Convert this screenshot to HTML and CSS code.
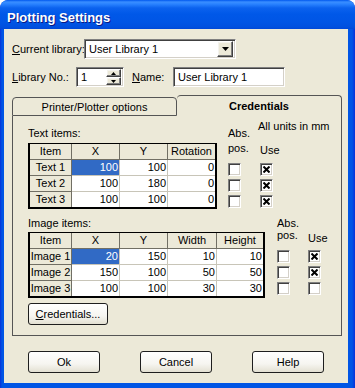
FILE: index.html
```html
<!DOCTYPE html>
<html>
<head>
<meta charset="utf-8">
<link rel="stylesheet" href="styles.css">
</head>
<body>
<div class="window">
  <div class="titlebar"><span class="title">Plotting Settings</span></div>
  <div class="client">
    <div class="row row-lib">
      <span class="lbl lbl-current"><u>C</u>urrent library:</span>
      <div class="combo sunken">
        <span class="combo-text">User Library 1</span>
        <span class="combo-btn raised"><svg width="7" height="4" viewBox="0 0 7 4"><polygon points="0,0 7,0 3.5,4" fill="#000"/></svg></span>
      </div>
    </div>
    <div class="row row-no">
      <span class="lbl lbl-no"><u>L</u>ibrary No.:</span>
      <div class="spin sunken">
        <span class="spin-text">1</span>
        <div class="spin-btns">
          <span class="spin-btn raised"><svg width="5" height="3" viewBox="0 0 5 3"><polygon points="2.5,0 5,3 0,3" fill="#000"/></svg></span>
          <span class="spin-btn raised"><svg width="5" height="3" viewBox="0 0 5 3"><polygon points="0,0 5,0 2.5,3" fill="#000"/></svg></span>
        </div>
      </div>
      <span class="lbl lbl-name"><u>N</u>ame:</span>
      <div class="field sunken">User Library 1</div>
    </div>
    <div class="tabs">
      <div class="tab">Printer/Plotter options</div>
      <div class="tab tab-active">Credentials</div>
    </div>
    <div class="panel">
      <div class="section sec-text">
        <div class="col-table">
          <div class="cap">Text items:</div>
          <div class="grid grid-text">
            <div class="c h">Item</div><div class="c h">X</div><div class="c h">Y</div><div class="c h last">Rotation</div>
            <div class="c h">Text 1</div><div class="c d sel">100</div><div class="c d">100</div><div class="c d last">0</div>
            <div class="c h">Text 2</div><div class="c d">100</div><div class="c d">180</div><div class="c d last">0</div>
            <div class="c h lr">Text 3</div><div class="c d lr">100</div><div class="c d lr">100</div><div class="c d last lr">0</div>
          </div>
        </div>
        <div class="col-abs abs-text">
          <div class="abs-lbl">Abs.<br>pos.</div>
          <div class="checks">
            <span class="cb"></span><span class="cb"></span><span class="cb"></span>
          </div>
        </div>
        <div class="col-use use-text">
          <div class="units">All units in mm</div>
          <div class="use-lbl">Use</div>
          <div class="checks">
            <span class="cb"><svg width="7" height="7" viewBox="0 0 7 7"><path d="M0.5 0.5L6.5 6.5M6.5 0.5L0.5 6.5" stroke="#000" stroke-width="2"/></svg></span>
            <span class="cb"><svg width="7" height="7" viewBox="0 0 7 7"><path d="M0.5 0.5L6.5 6.5M6.5 0.5L0.5 6.5" stroke="#000" stroke-width="2"/></svg></span>
            <span class="cb"><svg width="7" height="7" viewBox="0 0 7 7"><path d="M0.5 0.5L6.5 6.5M6.5 0.5L0.5 6.5" stroke="#000" stroke-width="2"/></svg></span>
          </div>
        </div>
      </div>
      <div class="section sec-image">
        <div class="col-table">
          <div class="cap">Image items:</div>
          <div class="grid grid-image">
            <div class="c h">Item</div><div class="c h">X</div><div class="c h">Y</div><div class="c h">Width</div><div class="c h last">Height</div>
            <div class="c h">Image 1</div><div class="c d sel">20</div><div class="c d">150</div><div class="c d">10</div><div class="c d last">10</div>
            <div class="c h">Image 2</div><div class="c d">150</div><div class="c d">100</div><div class="c d">50</div><div class="c d last">50</div>
            <div class="c h lr">Image 3</div><div class="c d lr">100</div><div class="c d lr">100</div><div class="c d lr">30</div><div class="c d last lr">30</div>
          </div>
        </div>
        <div class="col-abs abs-image">
          <div class="abs-lbl">Abs.<br>pos.</div>
          <div class="checks">
            <span class="cb"></span><span class="cb"></span><span class="cb"></span>
          </div>
        </div>
        <div class="col-use use-image">
          <div class="use-lbl">Use</div>
          <div class="checks">
            <span class="cb"><svg width="7" height="7" viewBox="0 0 7 7"><path d="M0.5 0.5L6.5 6.5M6.5 0.5L0.5 6.5" stroke="#000" stroke-width="2"/></svg></span>
            <span class="cb"><svg width="7" height="7" viewBox="0 0 7 7"><path d="M0.5 0.5L6.5 6.5M6.5 0.5L0.5 6.5" stroke="#000" stroke-width="2"/></svg></span>
            <span class="cb"></span>
          </div>
        </div>
      </div>
      <div class="btn btn-cred"><u>C</u>redentials...</div>
    </div>
    <div class="buttons">
      <div class="btn">Ok</div>
      <div class="btn">Cancel</div>
      <div class="btn">Help</div>
    </div>
  </div>
</div>
</body>
</html>
```

FILE: styles.css
```css
* { box-sizing: border-box; }
body {
  margin: 0;
  background: #fff;
  font-family: "Liberation Sans", Arial, sans-serif;
  font-size: 11px;
  color: #000;
}
.window {
  width: 355px;
  height: 388px;
  display: flex;
  flex-direction: column;
  background: linear-gradient(to right, #0831D9 0, #0055E5 2px, #0055E5 calc(100% - 3px), #0831D9 100%);
  border-radius: 8px 8px 0 0;
  overflow: hidden;
}
.titlebar {
  height: 29px;
  flex: none;
  padding: 5px 0 0 7px;
  display: flex;
  align-items: center;
  border-radius: 8px 8px 0 0;
  background: linear-gradient(to bottom, #0058EE 0, #3A8EFF 2px, #2A83FF 4px, #0B62EE 8px, #0058E8 14px, #0055E5 22px, #0050DF 27px, #0047D8 29px);
}
.title {
  color: #fff;
  font-weight: bold;
  font-size: 13px;
  text-shadow: 1px 1px #0A1883;
}
.client {
  flex: 1;
  margin: 0 7px 5px 4px;
  background: #ECE9D8;
  padding: 10px 0 0 8px;
}
.row {
  display: flex;
  align-items: center;
  height: 20px;
}
.row-no { margin-top: 8px; }
.lbl { white-space: nowrap; }
.lbl-current { width: 72px; }
.lbl-no { width: 64px; }
.lbl-name { width: 41px; margin-left: 8px; }

.sunken {
  background: #fff;
  border: 1px solid;
  border-color: #808080 #fff #fff #808080;
  box-shadow: inset 1px 1px #404040, inset -1px -1px #D4D0C8;
}
.raised {
  background: #ECE9D8;
  border: 1px solid;
  border-color: #fff #404040 #404040 #fff;
  box-shadow: inset -1px -1px #808080, inset 1px 1px #F4F3EE;
  display: flex;
  align-items: center;
  justify-content: center;
}
.combo {
  width: 152px;
  height: 20px;
  display: flex;
  align-items: center;
  padding: 2px;
}
.combo-text { flex: 1; padding-left: 2px; }
.combo-btn { width: 16px; height: 16px; }

.spin {
  width: 48px;
  height: 20px;
  display: flex;
  align-items: center;
  padding: 2px;
}
.spin-text { flex: 1; padding-left: 2px; }
.spin-btns {
  width: 15px;
  height: 16px;
  display: flex;
  flex-direction: column;
}
.spin-btn { height: 8px; }

.field {
  width: 112px;
  height: 20px;
  padding: 2px 0 0 4px;
  line-height: 15px;
}

.tabs {
  display: flex;
  align-items: flex-end;
  margin-top: 8px;
  height: 21px;
}
.tab {
  width: 165px;
  height: 19px;
  border: 1px solid #555;
  border-radius: 4px 4px 0 0;
  display: flex;
  align-items: center;
  justify-content: center;
  background: #ECE9D8;
}
.tab-active {
  height: 21px;
  border-bottom: none;
  font-weight: bold;
  border-left: none;
  padding-bottom: 1px;
}
.panel {
  width: 330px;
  height: 220px;
  border: 1px solid #555;
  border-top: none;
  background: #ECE9D8;
}
.section {
  display: flex;
  align-items: flex-start;
}
.col-table { margin-left: 15px; }
.cap { line-height: 16px; height: 16px; }
.sec-text .col-table { padding-top: 9px; }
.sec-text .cap { margin-bottom: 2px; }
.sec-image .col-table { padding-top: 6px; }
.sec-image .cap { margin-bottom: 1px; }

.grid {
  display: grid;
  border: 2px solid #000;
  border-top-width: 1px;
  background: #fff;
}
.grid-text { width: 189px; grid-template-columns: 42px 48px 48px 47px; }
.grid-image { width: 237px; grid-template-columns: 42px 48px 48px 49px 46px; }
.c {
  height: 16px;
  line-height: 15px;
  border-right: 1px solid #C8C5B8;
  border-bottom: 1px solid #C8C5B8;
  white-space: nowrap;
  overflow: hidden;
}
.c.h {
  background: #ECE9D8;
  text-align: center;
  border-right-color: #716F64;
  border-bottom-color: #716F64;
}
.c.d { text-align: right; padding-right: 1px; }
.c.last { border-right: none; }
.c.lr { border-bottom: none; height: 15px; }
.c.sel { background: #316AC5; color: #fff; }

.abs-lbl { white-space: nowrap; }
.abs-text { margin-left: 11px; width: 32px; padding-top: 10px; }
.abs-text .abs-lbl { line-height: 15px; }
.abs-text .checks { margin-top: 7px; }
.abs-image { margin-left: 12px; width: 31px; padding-top: 8px; }
.abs-image .abs-lbl { line-height: 12px; }
.abs-image .checks { margin-top: 9px; }

.units { line-height: 16px; margin-left: -2px; white-space: nowrap; }
.use-lbl { line-height: 16px; }
.use-text { padding-top: 2px; }
.use-text .use-lbl { margin-top: 8px; }
.use-text .checks { margin-top: 5px; }
.use-image { padding-top: 21px; }
.use-image .checks { margin-top: 4px; }

.checks { display: flex; flex-direction: column; gap: 3px; }
.cb {
  width: 13px;
  height: 13px;
  background: #fff;
  border: 1px solid;
  border-color: #808080 #fff #fff #808080;
  box-shadow: inset 1px 1px #404040, inset -1px -1px #D4D0C8;
  display: flex;
  align-items: center;
  justify-content: center;
}

.btn {
  width: 72px;
  height: 22px;
  border: 1px solid #1E1E1E;
  border-radius: 3px;
  background: linear-gradient(to bottom, #FFFFFF 0, #F6F5F0 60%, #E3E0D2 100%);
  display: flex;
  align-items: center;
  justify-content: center;
}
.btn-cred { width: 80px; margin: 5px 0 0 15px; }
.buttons {
  display: flex;
  gap: 40px;
  margin: 15px 0 0 16px;
}
```
